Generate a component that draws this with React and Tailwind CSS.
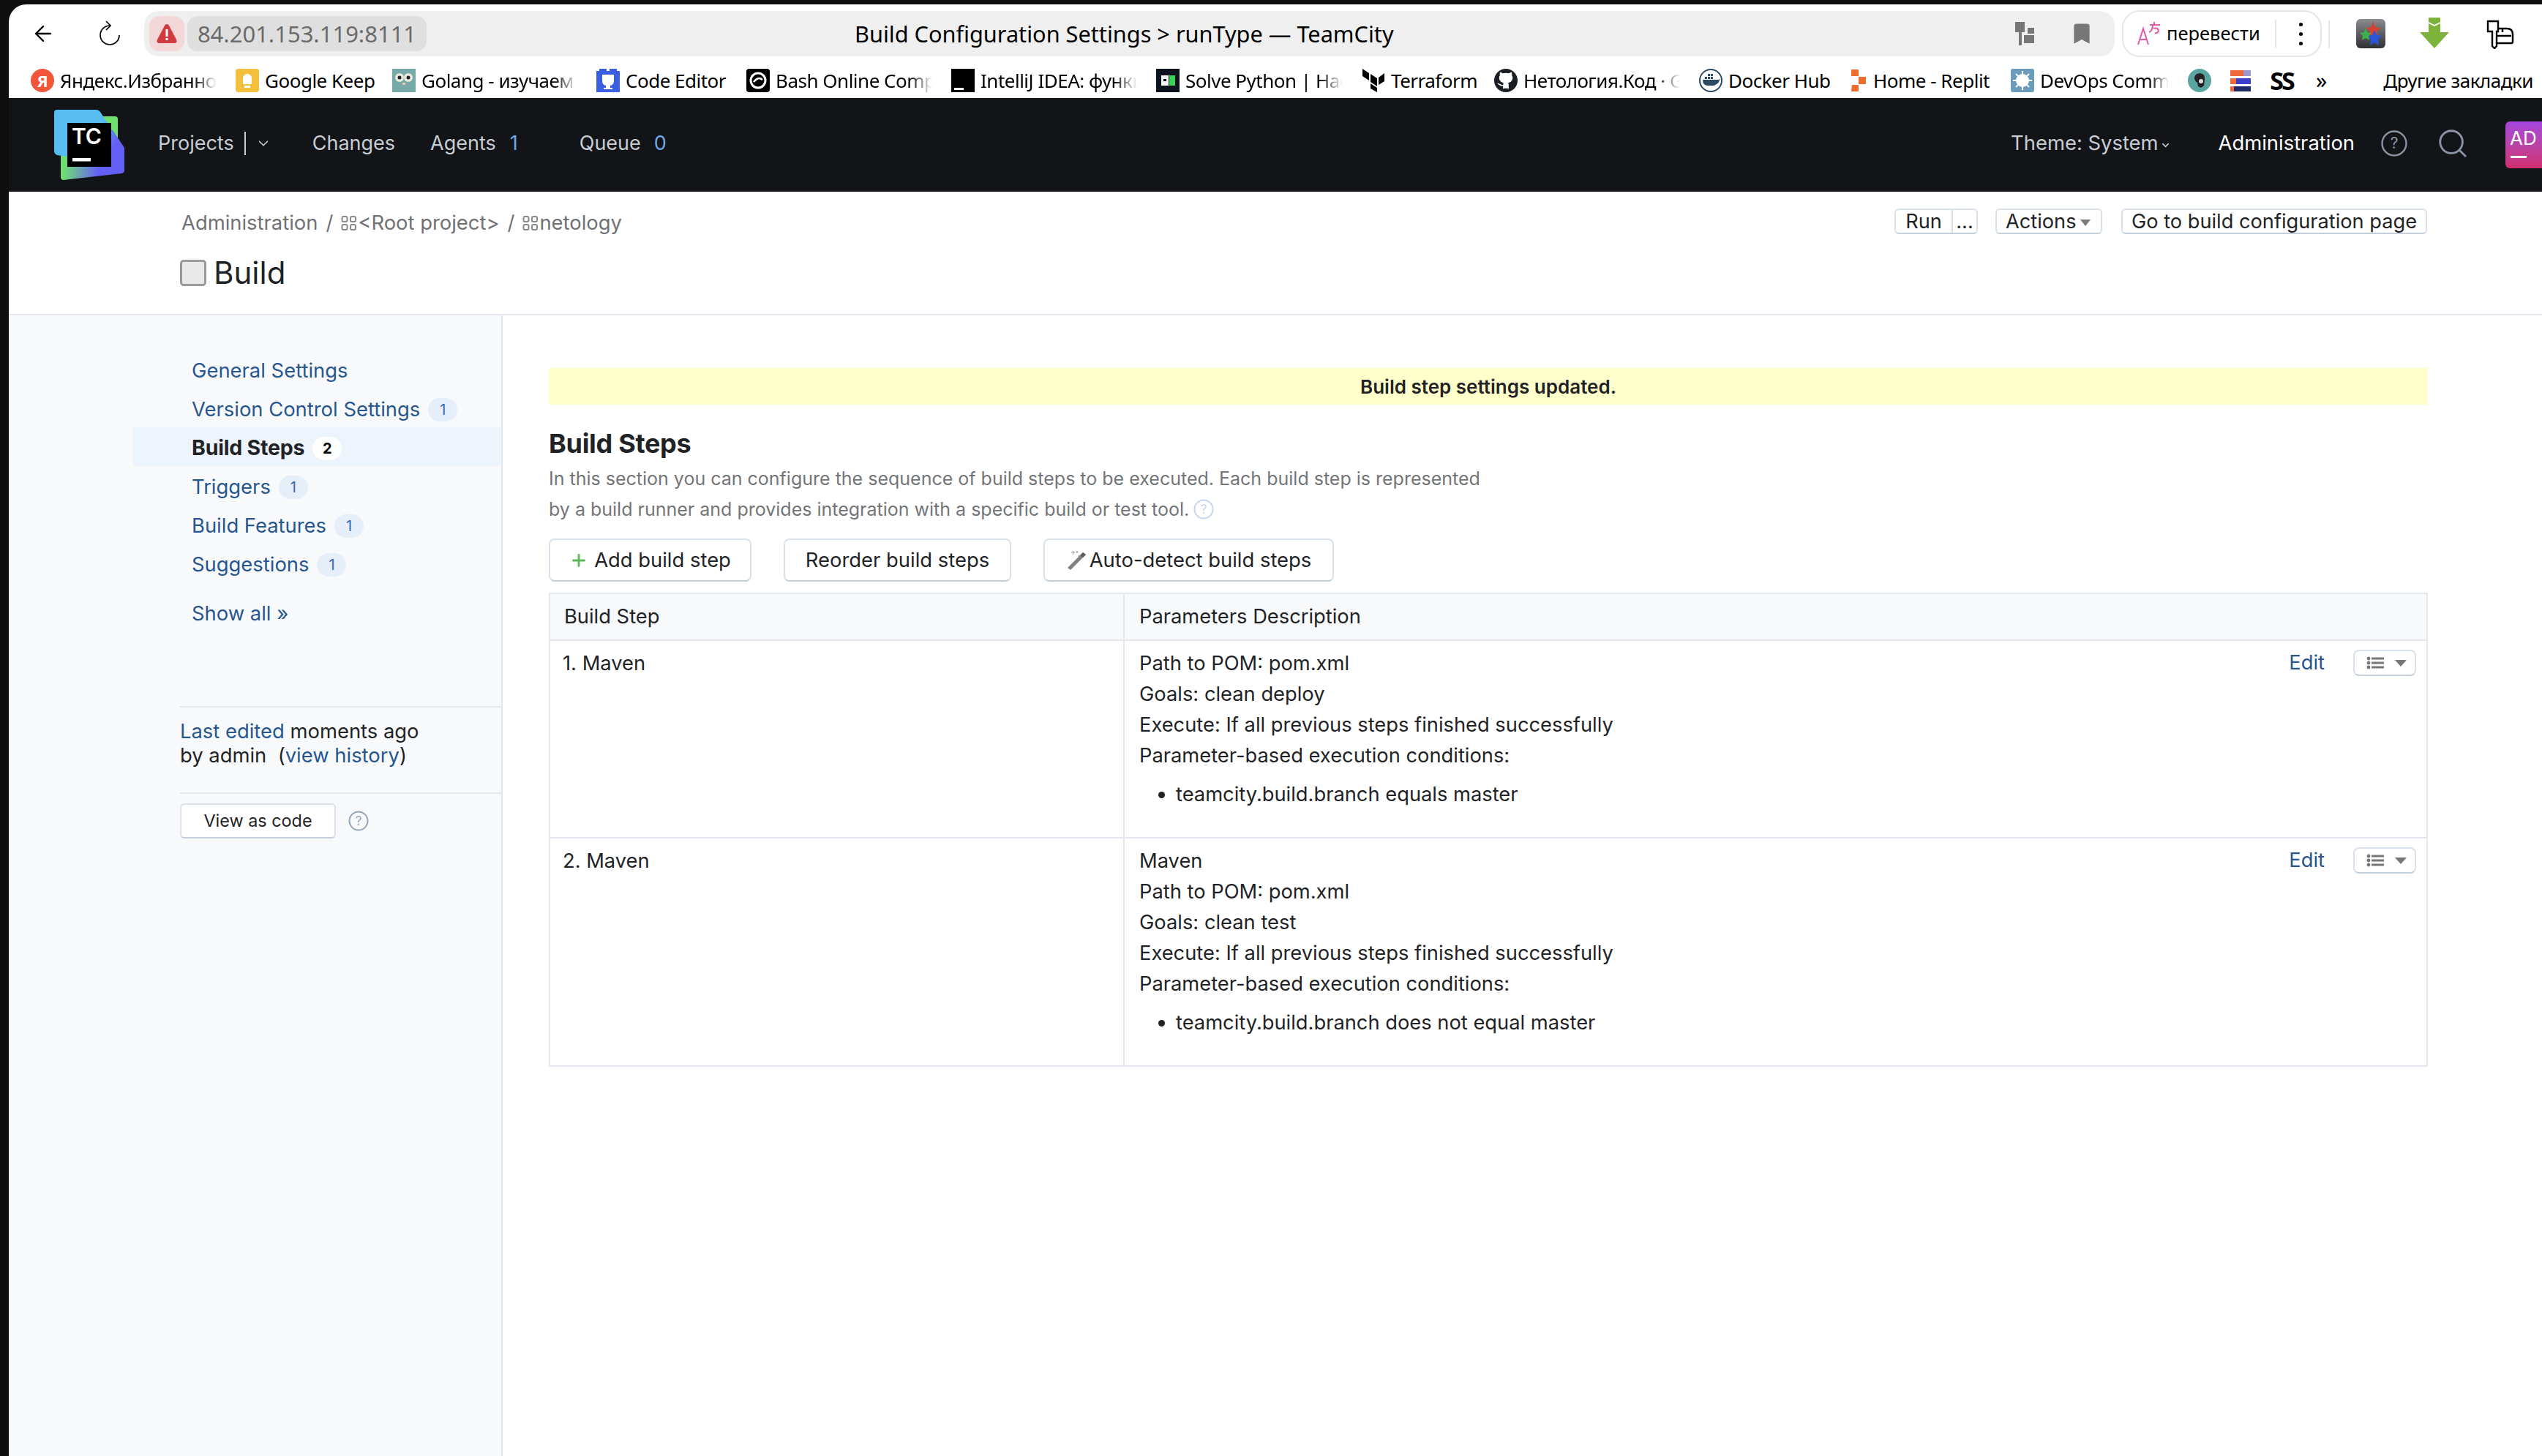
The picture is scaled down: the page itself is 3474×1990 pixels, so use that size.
import React from 'react';
import { ArrowLeft, Bookmark, ChevronDown, Search, Plus, Github } from 'lucide-react';

const inter = 'font-["Inter",sans-serif]';

const TcLogo = () => (
    <svg width="96" height="96" viewBox="0 0 96 96" className="shrink-0">
        <defs>
            <linearGradient id="tcBlue" x1="20" y1="10" x2="85" y2="65" gradientUnits="userSpaceOnUse">
                <stop offset="0.45" stopColor="#57bdf0" />
                <stop offset="0.85" stopColor="#6460f5" />
            </linearGradient>
            <linearGradient id="tcGreen" x1="12" y1="85" x2="60" y2="90" gradientUnits="userSpaceOnUse">
                <stop offset="0" stopColor="#6fe06f" />
                <stop offset="1" stopColor="#6460f5" />
            </linearGradient>
        </defs>
        <path d="M62 9H83q4 0 4 4V44H62Z" fill="#6fe06f" />
        <path d="M9 50V92q0 4 4 4L92 87q4-1 4-4V52L80 28H40Z" fill="url(#tcGreen)" />
        <path d="M4 0H58q3 0 5 3L96 54V83L70 72 4 62q-4-2-4-6V4q0-4 4-4Z" fill="url(#tcBlue)" />
        <rect x="18" y="18" width="60" height="60" fill="#000" />
        <text x="24" y="47" fill="#fff" fontFamily="Inter" fontWeight="600" fontSize="30">TC</text>
        <rect x="25" y="66" width="25" height="4.5" fill="#fff" />
    </svg>
);

const Fade = 'overflow-hidden whitespace-nowrap [mask-image:linear-gradient(to_right,black_85%,transparent)]';

const Favicon = ({ name }) => {
    if (name === 'ya') return (
        <span className="w-8 h-8 rounded-full bg-[#f0563a] text-white text-[22px] font-bold flex items-center justify-center">Я</span>
    );
    if (name === 'keep') return (
        <span className="w-8 h-8 rounded bg-[#f4bf3c] flex flex-col items-center justify-center gap-[2px]">
            <span className="w-3 h-[14px] rounded-t-full bg-white" />
            <span className="w-2 h-[3px] bg-white" />
        </span>
    );
    if (name === 'go') return (
        <svg width="32" height="32" viewBox="0 0 32 32">
            <rect width="32" height="32" fill="#76a9a8" />
            <circle cx="10" cy="12" r="6" fill="#e8e8dc" />
            <circle cx="22" cy="12" r="6" fill="#e8e8dc" />
            <circle cx="10" cy="12" r="2.5" fill="#222" />
            <circle cx="22" cy="12" r="2.5" fill="#222" />
            <rect x="14" y="19" width="4" height="3" fill="#e8c8a8" />
        </svg>
    );
    if (name === 'code') return (
        <svg width="32" height="32" viewBox="0 0 32 32">
            <rect width="32" height="32" fill="#3a5fe0" />
            <path d="M8 8h16v8q0 6-5 7v3h3v2H10v-2h3v-3q-5-1-5-7Z" fill="#fff" />
            <path d="M0 0h4v3H0ZM14 0h4v3h-4ZM28 0h4v3h-4Z" fill="#fff" />
        </svg>
    );
    if (name === 'bash') return (
        <svg width="32" height="32" viewBox="0 0 32 32">
            <rect width="32" height="32" rx="4" fill="#000" />
            <circle cx="16" cy="16" r="10" fill="none" stroke="#fff" strokeWidth="3" />
            <path d="M10 18q6-8 12-3" fill="none" stroke="#fff" strokeWidth="2.5" />
        </svg>
    );
    if (name === 'idea') return (
        <svg width="32" height="32" viewBox="0 0 32 32">
            <rect width="32" height="32" fill="#000" />
            <rect x="4" y="26" width="13" height="3" fill="#fff" />
        </svg>
    );
    if (name === 'hr') return (
        <svg width="32" height="32" viewBox="0 0 32 32">
            <rect width="32" height="32" fill="#0e141e" />
            <rect x="7" y="9" width="10" height="14" fill="#fff" />
            <rect x="18" y="9" width="8" height="14" fill="#39d353" />
            <rect x="10" y="14" width="4" height="3" fill="#0e141e" />
        </svg>
    );
    if (name === 'tf') return (
        <svg width="32" height="32" viewBox="0 0 32 32">
            <path d="M1 0l9 6v10L1 10ZM12 7l9 6v11l-9-6ZM31 6l-8 6v10l8-5ZM12 20l9 6v6l-9-5Z" fill="#000" />
        </svg>
    );
    if (name === 'gh') return (
        <span className="w-8 h-8 rounded-full bg-[#1b1f24] flex items-center justify-center">
            <Github size={26} color="#fff" fill="#fff" strokeWidth={1} />
        </span>
    );
    if (name === 'docker') return (
        <svg width="32" height="32" viewBox="0 0 32 32">
            <circle cx="16" cy="16" r="15" fill="#fff" stroke="#2d4a63" strokeWidth="2" />
            <path d="M5 15h20q3 0 3-2 1 7-8 10H12q-7 0-7-8Z" fill="#2d4a63" />
            <path d="M8 11h3v3H8ZM12 11h3v3h-3ZM16 11h3v3h-3ZM12 7h3v3h-3ZM16 7h3v3h-3Z" fill="#2d4a63" />
        </svg>
    );
    if (name === 'replit') return (
        <svg width="24" height="32" viewBox="0 0 24 32">
            <path d="M2 1h9q1 0 1 1v8H3q-1 0-1-1ZM12 11h9q1 0 1 1v8q0 1-1 1h-9ZM3 22h9v8q0 1-1 1H3q-1 0-1-1Z" fill="#ee6f2d" />
        </svg>
    );
    if (name === 'devops') return (
        <svg width="32" height="32" viewBox="0 0 32 32">
            <rect width="32" height="32" rx="3" fill="#6c9cbc" />
            <circle cx="16" cy="16" r="9" fill="#fff" />
            <path d="M16 3v26M3 16h26M7 7l18 18M25 7L7 25" stroke="#fff" strokeWidth="2" />
        </svg>
    );
    if (name === 'face') return (
        <svg width="32" height="32" viewBox="0 0 32 32">
            <circle cx="16" cy="16" r="16" fill="#5aa5a0" />
            <path d="M9 12q1-6 8-6 7 1 6 9l-1 8-4 3-4-2-1-5q-4-2-4-7Z" fill="#222" />
            <circle cx="18" cy="17" r="3" fill="#ddd" />
        </svg>
    );
    if (name === 'books') return (
        <svg width="28" height="32" viewBox="0 0 28 32">
            <rect y="2" width="28" height="8" fill="#ee6a3a" />
            <rect x="18" y="2" width="10" height="8" fill="#9a9ad0" />
            <rect x="0" y="13" width="28" height="8" fill="#3a3ec8" />
            <rect x="0" y="13" width="8" height="8" fill="#ee6a3a" />
            <rect x="0" y="24" width="28" height="7" fill="#1f2a6a" />
            <rect x="0" y="24" width="5" height="7" fill="#ee6a3a" />
        </svg>
    );
    return null;
};

const bookmarks = [
    { icon: 'ya', label: 'Яндекс.Избранное', w: 'w-[214px]', fade: true },
    { icon: 'keep', label: 'Google Keep', w: 'w-[148px]' },
    { icon: 'go', label: 'Golang - изучаем язык', w: 'w-[213px]', fade: true },
    { icon: 'code', label: 'Code Editor', w: 'w-[139px]' },
    { icon: 'bash', label: 'Bash Online Compiler', w: 'w-[214px]', fade: true },
    { icon: 'idea', label: 'IntelliJ IDEA: функции', w: 'w-[214px]', fade: true },
    { icon: 'hr', label: 'Solve Python | HackerRank', w: 'w-[215px]', fade: true },
    { icon: 'tf', label: 'Terraform', w: 'w-[115px]' },
    { icon: 'gh', label: 'Нетология.Код · GitHub', w: 'w-[214px]', fade: true },
    { icon: 'docker', label: 'Docker Hub', w: 'w-[140px]' },
    { icon: 'replit', label: 'Home - Replit', w: 'w-[162px]' },
    { icon: 'devops', label: 'DevOps Community', w: 'w-[176px]', fade: true },
];

const BrowserChrome = () => (
    <div className="bg-white rounded-tl-[24px] font-['Noto_Sans',sans-serif] text-black">
        <div className="h-[71px] flex items-start pt-[9px]">
            <div className="w-[185px] h-[62px] flex items-center pl-[30px] gap-[57px] shrink-0">
                <ArrowLeft size={34} strokeWidth={1.6} />
                <svg width="34" height="36" viewBox="0 0 34 36" fill="none" stroke="#000" strokeWidth="1.7">
                    <path d="M17 7A13 13 0 1 0 30 20" />
                    <path d="M12 1l6 6-6 6" />
                </svg>
            </div>
            <div className="w-[2693px] h-[62px] rounded-[20px] bg-[#efefef] flex items-center pl-[7px] relative shrink-0">
                <div className="w-[48px] h-[48px] rounded-[14px] bg-[#f4d7d8] flex items-center justify-center">
                    <svg width="30" height="30" viewBox="0 0 30 30">
                        <path d="M15 2q2 0 3 2l10 19q2 5-3 5H5q-5 0-3-5L12 4q1-2 3-2Z" fill="#cf3b3f" />
                        <rect x="13.5" y="9" width="3" height="10" fill="#fff" />
                        <rect x="13.5" y="21" width="3" height="3" fill="#fff" />
                    </svg>
                </div>
                <div className="ml-[4px] w-[327px] h-[48px] rounded-[14px] bg-[#dfdfdf] flex items-center justify-center text-[31px] text-[#6b6b6b]">84.201.153.119:8111</div>
                <div className="ml-[585px] text-[30.7px] whitespace-nowrap">Build Configuration Settings &gt; runType — TeamCity</div>
                <div className="ml-auto flex items-center gap-[48px] pr-[28px]">
                    <svg width="26" height="34" viewBox="0 0 26 34">
                        <path d="M0 1h13v14H9v18H5V15H0Z" fill="#777" />
                        <rect x="17" y="9" width="9" height="8" fill="#777" />
                        <rect x="12" y="19" width="14" height="11" fill="#777" />
                    </svg>
                    <Bookmark size={34} color="#777" fill="#777" strokeWidth={1} />
                </div>
            </div>
            <div className="ml-[10px] w-[273px] h-[64px] -mt-[1px] rounded-[24px] border-2 border-[#e6e6e6] flex items-center pl-[18px] shrink-0">
                <svg width="34" height="34" viewBox="0 0 34 34" fill="none" stroke="#e05aa8" strokeWidth="2">
                    <path d="M2 32 9 10l7 22M5 25h8" />
                    <path d="M18 5h14M22 5c0 6-3 9-5 10M24 1v5M23 10q6-2 7 3-1 4-5 3" />
                </svg>
                <span className="ml-[7px] w-[128px] text-[25.5px] leading-none">перевести</span>
                <span className="ml-[20px] w-[2px] h-[38px] bg-[#e6e6e6]" />
                <span className="ml-[31px] flex flex-col gap-[8px]">
                    <span className="w-[5px] h-[5px] rounded-full bg-black" />
                    <span className="w-[5px] h-[5px] rounded-full bg-black" />
                    <span className="w-[5px] h-[5px] rounded-full bg-black" />
                </span>
            </div>
            <span className="ml-[9px] mt-[13px] w-[2px] h-[38px] bg-[#e6e6e6] shrink-0" />
            <div className="ml-[36px] shrink-0 pt-[11px]">
                <svg width="40" height="40" viewBox="0 0 40 40">
                    <defs>
                        <linearGradient id="starBox" x1="0" y1="0" x2="0" y2="1">
                            <stop offset="0" stopColor="#8a8c90" />
                            <stop offset="1" stopColor="#2e3033" />
                        </linearGradient>
                    </defs>
                    <rect width="40" height="40" rx="6" fill="url(#starBox)" />
                    <path d="M23 3l3 8 8 1-6 5 2 8-7-4-6 4 2-8-6-5 8-1Z" fill="#d8402f" />
                    <path d="M25 15l3 7 7 1-5 5 1 8-6-4-6 4 1-8-5-5 7-1Z" fill="#2a55d8" />
                    <path d="M13 12l2 6 6 1-4 4 1 6-5-3-5 3 1-6-4-4 6-1Z" fill="#3eb24a" />
                </svg>
            </div>
            <div className="ml-[47px] shrink-0 pt-[9px]">
                <svg width="40" height="42" viewBox="0 0 40 42">
                    <path d="M12 0h16v6l-8 4-8-4ZM12 8l8 4 8-4v12h12L20 42 0 20h12Z" fill="#7db33a" />
                </svg>
            </div>
            <div className="ml-[51px] shrink-0 pt-[12px]">
                <svg width="38" height="40" viewBox="0 0 38 40" fill="none" stroke="#000" strokeWidth="2.4">
                    <path d="M2 2h14v14H14v20l-3 3-3-3V16H2Z" />
                    <path d="M16 12h12q8 0 8 8v10q0 2-2 2H14" />
                    <path d="M22 12v5M14 22h20" />
                </svg>
            </div>
        </div>
        <div className="h-[57px] pt-[9px] flex items-center pl-[30px] pr-[12px] text-[26px] whitespace-nowrap tracking-[-0.5px]">
            {bookmarks.map((b) => (
                <div key={b.label} className="flex items-center gap-[8px] mr-[26px] shrink-0">
                    <Favicon name={b.icon} />
                    <span className={`${b.w} ${b.fade ? Fade : ''}`}>{b.label}</span>
                </div>
            ))}
            <Favicon name="face" />
            <span className="ml-[26px] flex"><Favicon name="books" /></span>
            <span className="ml-[26px] w-[32px] text-[34px] font-bold leading-none text-center tracking-[-3px]">SS</span>
            <span className="ml-[31px] text-[30px] leading-none">»</span>
            <span className="ml-auto">Другие закладки</span>
        </div>
    </div>
);

const Header = () => (
    <div className={`h-[128px] pb-[4px] bg-[#121417] flex items-center ${inter} text-[27px] text-[#c8ccd3] pl-[62px] whitespace-nowrap`}>
        <div className="flex mt-[4px]"><TcLogo /></div>
        <span className="ml-[46px]">Projects</span>
        <span className="ml-[14px] w-[2px] h-[32px] bg-[#c8ccd3]" />
        <ChevronDown size={22} strokeWidth={1.8} className="ml-[13px]" />
        <span className="ml-[56px]">Changes</span>
        <span className="ml-[48px]">Agents</span>
        <span className="ml-[19px] text-[#6fa8e8] w-[17px]">1</span>
        <span className="ml-[78px]">Queue</span>
        <span className="ml-[18px] text-[#6fa8e8]">0</span>
        <span className="ml-auto text-[27.4px]">Theme: System</span>
        <ChevronDown size={15} strokeWidth={2.4} className="ml-[2px] mt-[4px]" />
        <span className="ml-[65px] text-[27.4px] text-white">Administration</span>
        <svg width="36" height="36" viewBox="0 0 36 36" className="ml-[36px]">
            <circle cx="18" cy="18" r="16.5" fill="none" stroke="#8a92a4" strokeWidth="2.4" />
            <text x="18" y="25" textAnchor="middle" fontFamily="Inter" fontSize="21" fill="#8a92a4">?</text>
        </svg>
        <Search size={46} color="#8a92a4" strokeWidth={1.5} className="ml-[39px]" />
        <div className="ml-[49px] mt-[4px] w-[50px] h-[64px] rounded-l-[6px] bg-gradient-to-b from-[#a446dd] to-[#d22c6f] text-white text-[26px] leading-none pl-[6px] pt-[10px] overflow-hidden">
            AD
            <div className="w-[22px] h-[3px] bg-white mt-[11px] ml-[1px]" />
        </div>
    </div>
);

const ProjectIcon = () => (
    <svg width="22" height="22" viewBox="0 0 22 22" fill="none" stroke="#8a8a8a" strokeWidth="2" className="shrink-0">
        <rect x="1.5" y="2" width="7" height="7" rx="2" />
        <rect x="13" y="2" width="7" height="7" rx="2" />
        <rect x="1.5" y="13" width="7" height="7" rx="2" />
        <rect x="13" y="13" width="7" height="7" rx="2" />
    </svg>
);

const TopButton = ({ children, className }) => (
    <div className={`h-[35px] rounded-[6px] border-2 border-t-[#dbe1ea] border-x-[#dbe1ea] border-b-[#c5cfdc] bg-white flex items-center text-[27.2px] text-[#1f2326] leading-none ${className}`}>
        {children}
    </div>
);

const PageTitle = () => (
    <div className={`h-[169px] shrink-0 border-b-2 border-[#e4e8ee] flex justify-between pl-[234px] pr-[157px] ${inter}`}>
        <div>
            <div className="mt-[26px] ml-[2px] h-[34px] flex items-center text-[27.4px] text-[#6f7175] whitespace-nowrap">
                <span>Administration</span>
                <span className="mx-[11px]">/</span>
                <ProjectIcon />
                <span className="ml-[1px]">&lt;Root project&gt;</span>
                <span className="mx-[11px]">/</span>
                <ProjectIcon />
                <span className="ml-[1px]">netology</span>
            </div>
            <div className="mt-[29px] flex items-center">
                <span className="w-[36px] h-[36px] rounded-[5px] bg-[#e9e9e9] border-[3px] border-[#9a9a9a]" />
                <span className="ml-[10px] text-[42px] leading-[44px] text-[#1f2326]">Build</span>
            </div>
        </div>
        <div className="mt-[23px] flex items-start">
            <TopButton className="w-[114px]">
                <span className="w-[76px] text-center">Run</span>
                <span className="w-[2px] h-full bg-[#dbe1ea]" />
                <span className="flex-1 text-center">...</span>
            </TopButton>
            <TopButton className="ml-[24px] w-[146px] pl-[12px]">
                <span>Actions</span>
                <span className="ml-[6px] mt-[3px] w-0 h-0 border-x-[7px] border-x-transparent border-t-[9px] border-t-[#7a7a7a]" />
            </TopButton>
            <TopButton className="ml-[26px] w-[418px] justify-center">Go to build configuration page</TopButton>
        </div>
    </div>
);

const Badge = ({ value, active }) => (
    <span className={`ml-[11px] w-[40px] h-[32px] rounded-full flex items-center justify-center text-[20px] ${active ? 'bg-white text-black font-bold' : 'bg-[#e6eef9] text-[#3a68b4]'}`}>
        {value}
    </span>
);

const navItems = [
    { label: 'General Settings' },
    { label: 'Version Control Settings', count: 1 },
    { label: 'Build Steps', count: 2, active: true },
    { label: 'Triggers', count: 1 },
    { label: 'Build Features', count: 1 },
    { label: 'Suggestions', count: 1 },
];

const Sidebar = () => (
    <div className={`w-[675px] shrink-0 bg-[#f7f9fb] border-r-2 border-[#e4e8ee] pt-[47px] pl-[170px] text-[27.4px] ${inter}`}>
        {navItems.map((item) => (
            <div key={item.label} className={`h-[53px] pt-[4px] flex items-center pl-[80px] whitespace-nowrap ${item.active ? 'bg-[#edf4fc] text-[#1f2326] font-bold text-[28.5px] tracking-[-0.2px]' : 'text-[#27568f]'}`}>
                <span>{item.label}</span>
                {item.count && <Badge value={item.count} active={item.active} />}
            </div>
        ))}
        <div className="mt-[14px] h-[53px] pt-[4px] flex items-center pl-[80px] text-[#27568f]">Show all »</div>
        <div className="ml-[64px] mt-[102px] border-t-2 border-[#e4e8ee] pt-[16px] pb-[34px] leading-[33px] text-[#1f2326]">
            <div><span className="text-[#27568f]">Last edited</span> moments ago</div>
            <div>by admin&nbsp; (<span className="text-[#27568f]">view history</span>)</div>
        </div>
        <div className="ml-[64px] border-t-2 border-[#e4e8ee] pt-[13px] flex items-center">
            <div className="w-[213px] h-[48px] bg-white rounded-[6px] border-2 border-[#dbe1ea] border-b-[#c5cfdc] flex items-center justify-center text-[23.4px] text-[#1f2326]">View as code</div>
            <svg width="28" height="28" viewBox="0 0 28 28" className="ml-[17px]">
                <circle cx="14" cy="14" r="12.5" fill="none" stroke="#97a3bb" strokeWidth="2" />
                <text x="14" y="20" textAnchor="middle" fontFamily="Inter" fontSize="17" fill="#97a3bb">?</text>
            </svg>
        </div>
    </div>
);

const ActionButton = ({ children, className }) => (
    <div className={`h-[59px] rounded-[8px] border-2 border-[#dbe1ea] border-b-[#c5cfdc] flex items-center justify-center text-[27.4px] text-[#1f2326] whitespace-nowrap ${className}`}>
        {children}
    </div>
);

const RowActions = () => (
    <div className="flex items-start pt-[12px] shrink-0">
        <span className="text-[#27568f] leading-[36px]">Edit</span>
        <div className="ml-[39px] w-[86px] h-[36px] rounded-[8px] border-2 border-[#dbe1ea] border-b-[#c5cfdc] flex items-center pl-[16px]">
            <svg width="24" height="18" viewBox="0 0 24 18" fill="#777">
                <circle cx="3" cy="3" r="2.4" /><circle cx="3" cy="9" r="2.4" /><circle cx="3" cy="15" r="2.4" />
                <rect x="7" y="1.5" width="17" height="3" /><rect x="7" y="7.5" width="17" height="3" /><rect x="7" y="13.5" width="17" height="3" />
            </svg>
            <span className="ml-[15px] w-0 h-0 border-x-[8px] border-x-transparent border-t-[9px] border-t-[#777]" />
        </div>
    </div>
);

const StepRow = ({ name, lines, condition, heightClass }) => (
    <div className={`grid grid-cols-[785px_1fr] border-b-2 border-[#e4e8ee] ${heightClass}`}>
        <div className="border-r-2 border-[#e4e8ee] pl-[17px] pt-[10px] leading-[42px]">{name}</div>
        <div className="flex justify-between pl-[20px] pr-[14px]">
            <div className="pt-[10px] leading-[42px]">
                {lines.map((line) => <div key={line}>{line}</div>)}
                <ul className="list-disc mt-[11px] pl-[50px]">
                    <li>{condition}</li>
                </ul>
            </div>
            <RowActions />
        </div>
    </div>
);

const Main = () => (
    <div className={`flex-1 pl-[63px] pr-[156px] pt-[72px] text-[#1f2326] ${inter}`}>
        <div className="h-[50px] bg-[#ffffcc] flex items-center justify-center text-[26px] font-semibold">Build step settings updated.</div>
        <h2 className="mt-[31px] text-[36px] leading-[44px] font-bold tracking-[-0.3px]">Build Steps</h2>
        <p className="mt-[5px] text-[25px] leading-[42px] text-[#737578]">
            In this section you can configure the sequence of build steps to be executed. Each build step is represented
            <br />
            by a build runner and provides integration with a specific build or test tool.
            <svg width="28" height="28" viewBox="0 0 28 28" className="inline ml-[6px] -mt-[4px]">
                <circle cx="14" cy="14" r="12.5" fill="none" stroke="#c5d6ea" strokeWidth="2" />
                <text x="14" y="20" textAnchor="middle" fontFamily="Inter" fontSize="17" fill="#c5d6ea">?</text>
            </svg>
        </p>
        <div className="mt-[19px] flex">
            <ActionButton className="w-[277px]">
                <Plus size={26} color="#5cb85c" strokeWidth={2.6} className="mr-[8px]" />
                Add build step
            </ActionButton>
            <ActionButton className="ml-[44px] w-[311px]">Reorder build steps</ActionButton>
            <ActionButton className="ml-[44px] w-[397px]">
                <svg width="28" height="28" viewBox="0 0 28 28" className="mr-[4px]">
                    <path d="M23 3l4 3L6 27l-4-3Z" fill="#808080" />
                    <path d="M19 7l4 3 4-4-4-3Z" fill="#5f5f5f" />
                    <path d="M7 3h5M9.500 1v5M15 1v3M13.500 2.500h3M16 8h3M17.500 6.500v3" stroke="#9a9a9a" strokeWidth="1" fill="none" />
                </svg>
                Auto-detect build steps
            </ActionButton>
        </div>
        <div className="mt-[15px] border-x-2 border-t-2 border-[#e4e8ee] text-[27.3px]">
            <div className="grid grid-cols-[785px_1fr] h-[64px] bg-[#f7f9fb] border-b-2 border-[#e4e8ee] items-stretch">
                <div className="border-r-2 border-[#e4e8ee] pl-[19px] flex items-center">Build Step</div>
                <div className="pl-[20px] flex items-center">Parameters Description</div>
            </div>
            <StepRow
                name="1. Maven"
                lines={['Path to POM: pom.xml', 'Goals: clean deploy', 'Execute: If all previous steps finished successfully', 'Parameter-based execution conditions:']}
                condition="teamcity.build.branch equals master"
                heightClass="h-[270px]"
            />
            <StepRow
                name="2. Maven"
                lines={['Maven', 'Path to POM: pom.xml', 'Goals: clean test', 'Execute: If all previous steps finished successfully', 'Parameter-based execution conditions:']}
                condition="teamcity.build.branch does not equal master"
                heightClass="h-[312px]"
            />
        </div>
    </div>
);

const App = () => {
    return (
        <div className="w-[3474px] h-[1990px] bg-[#0e0e0e] pt-[6px] pl-[12px] overflow-hidden flex flex-col">
            <BrowserChrome />
            <Header />
            <div className="flex-1 bg-white flex flex-col min-h-0">
                <PageTitle />
                <div className="flex flex-1 min-h-0">
                    <Sidebar />
                    <Main />
                </div>
            </div>
        </div>
    );
};

export default App;
